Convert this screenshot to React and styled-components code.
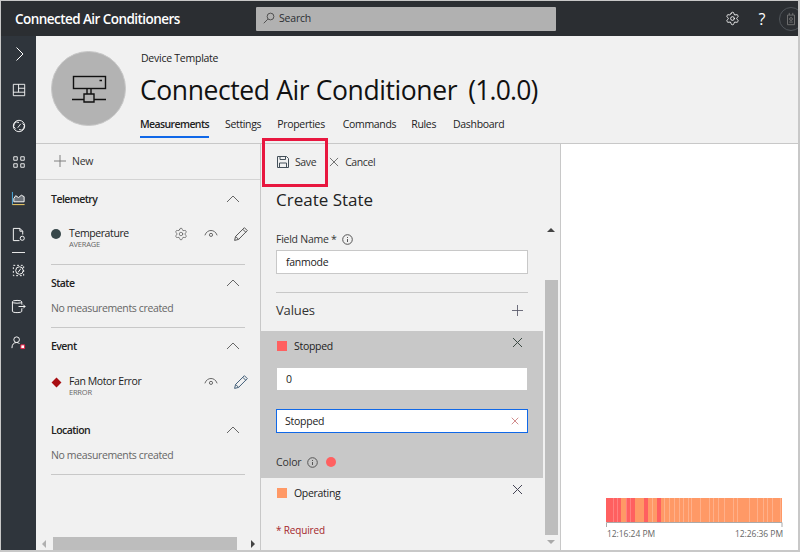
import React from 'react';
import styled, { createGlobalStyle } from 'styled-components';
import { Settings } from 'lucide-react';

const GlobalStyle = createGlobalStyle`
    html, body {
        margin: 0;
        padding: 0;
        background: #fff;
        font-family: 'Open Sans', 'Noto Sans', sans-serif;
    }
    * {
        box-sizing: border-box;
    }
`;

const Page = styled.div`
    width: 800px;
    height: 552px;
    position: relative;
    display: flex;
    flex-direction: column;
    overflow: hidden;
    background: #fff;
    border-top: 1px solid #c8c8c8;
    border-right: 2px solid #c8c8c8;
    border-bottom: 2px solid #c8c8c8;
    border-left: 1px solid #c8c8c8;
`;

const TopBar = styled.div`
    height: 35px;
    flex: none;
    background: #2b2e32;
    display: flex;
    align-items: center;
    color: #fff;
`;

const AppName = styled.div`
    width: 255px;
    padding-left: 14px;
    font-size: 13.5px;
    font-weight: 600;
    letter-spacing: -0.55px;
`;

const SearchBox = styled.div`
    width: 300px;
    height: 24px;
    background: #b1b1b1;
    border-radius: 1px;
    display: flex;
    align-items: center;
    gap: 4px;
    padding: 0 0 2px 7px;
    color: #2b2e32;
    font-size: 10.5px;
    letter-spacing: -0.2px;
`;

const TopActions = styled.div`
    margin-left: auto;
    margin-right: -5px;
    display: flex;
    align-items: center;
    color: #fff;
`;

const HelpMark = styled.div`
    width: 20px;
    margin: 0 7px 0 12px;
    text-align: center;
    font-size: 16px;
`;

const AvatarRing = styled.div`
    width: 24px;
    height: 24px;
    border-radius: 50%;
    border: 1px solid #50555a;
    display: flex;
    align-items: center;
    justify-content: center;
`;

const Body = styled.div`
    flex: 1;
    min-height: 0;
    display: flex;
`;

const Sidebar = styled.div`
    width: 35px;
    flex: none;
    background: #2f353c;
    display: flex;
    flex-direction: column;
`;

const NavItem = styled.div`
    height: 36px;
    flex: none;
    display: flex;
    align-items: center;
    justify-content: center;
`;

const NavRule = styled.div`
    width: 13px;
    height: 1px;
    flex: none;
    margin: 0 0 -1px 11px;
    background: #e6e6e6;
`;

const Main = styled.div`
    flex: 1;
    min-width: 0;
    display: flex;
    flex-direction: column;
`;

const Header = styled.div`
    height: 108px;
    flex: none;
    background: #f1f1f1;
    border-bottom: 1px solid #c8c8c8;
    display: flex;
    padding: 15px 0 0 15px;
`;

const DeviceCircle = styled.div`
    width: 75px;
    height: 75px;
    flex: none;
    border-radius: 50%;
    background: #b3b3b3;
    border: 1px solid #c8c8c8;
    display: flex;
    align-items: center;
    justify-content: center;
`;

const HeaderText = styled.div`
    margin-left: 14px;
    display: flex;
    flex-direction: column;
`;

const Eyebrow = styled.div`
    font-size: 10.5px;
    line-height: 14px;
    color: #222;
    padding-left: 1px;
    letter-spacing: -0.25px;
`;

const PageTitle = styled.h1`
    margin: 7px 0 0;
    font-size: 26.5px;
    line-height: 36px;
    font-weight: 400;
    color: #111;
    letter-spacing: -0.4px;
    display: flex;
    gap: 11px;
    white-space: nowrap;
`;

const TitleVersion = styled.span`
    letter-spacing: -0.8px;
`;

const Tabs = styled.div`
    display: flex;
    margin-top: 7px;
`;

const Tab = styled.div`
    height: 23px;
    margin-right: ${(props) => props.$gap}px;
    font-size: 10.5px;
    line-height: 19px;
    color: #222;
    letter-spacing: ${(props) => (props.$active ? -0.6 : -0.33)}px;
    font-weight: ${(props) => (props.$active ? 600 : 500)};
    border-bottom: 2px solid ${(props) => (props.$active ? '#1068e8' : 'transparent')};
    white-space: nowrap;
`;

const Panels = styled.div`
    flex: 1;
    min-height: 0;
    display: flex;
`;

const LeftPanel = styled.div`
    width: 225px;
    flex: none;
    background: #f1f1f1;
    border-right: 1px solid #c8c8c8;
    display: flex;
    flex-direction: column;
`;

const NewBar = styled.div`
    height: 36px;
    flex: none;
    border-bottom: 1px solid #d4d4d4;
    display: flex;
    align-items: center;
    gap: 6px;
    padding: 0 0 1px 18px;
    font-size: 10.5px;
    letter-spacing: -0.25px;
    color: #333;
`;

const MeasureList = styled.div`
    flex: 1;
    min-height: 0;
    padding: 0 15px;
`;

const Section = styled.div`
    border-bottom: ${(props) => (props.$plain ? 'none' : '1px solid #c8c8c8')};
    height: ${(props) => props.$height}px;
`;

const SectionHead = styled.div`
    height: ${(props) => props.$height}px;
    display: flex;
    align-items: center;
    justify-content: space-between;
    padding-right: 5px;
    font-size: 10.5px;
    font-weight: 600;
    color: #222;
    letter-spacing: -0.55px;
`;

const EmptyNote = styled.div`
    margin-top: 1px;
    font-size: 10.5px;
    line-height: 12px;
    color: #666;
    letter-spacing: -0.36px;
`;

const MeasureRow = styled.div`
    display: flex;
    align-items: flex-start;
    margin-top: ${(props) => props.$top}px;
    height: 26px;
`;

const StatusMark = styled.div`
    width: 18px;
    flex: none;
    padding-top: 2px;
`;

const Dot = styled.div`
    width: 10px;
    height: 10px;
    border-radius: 50%;
    background: #37474a;
`;

const Diamond = styled.div`
    width: 7px;
    height: 7px;
    margin: 2px 0 0 2px;
    background: #a80e12;
    transform: rotate(45deg);
`;

const MeasureText = styled.div`
    flex: 1;
`;

const MeasureName = styled.div`
    font-size: 10.5px;
    line-height: 13px;
    color: #222;
    letter-spacing: -0.4px;
`;

const MeasureKind = styled.div`
    font-size: 7.5px;
    line-height: 8px;
    color: #666;
    letter-spacing: -0.22px;
`;

const RowActions = styled.div`
    display: flex;
    align-items: center;
    gap: 16px;
    margin-right: -3px;
`;

const HScroll = styled.div`
    height: 13px;
    flex: none;
    display: flex;
    align-items: center;
`;

const ScrollArrow = styled.div`
    width: 0;
    height: 0;
    flex: none;
    border-top: 4px solid transparent;
    border-bottom: 4px solid transparent;
    border-right: ${(props) => (props.$side === 'left' ? '4px solid #b0b0b0' : 'none')};
    border-left: ${(props) => (props.$side === 'right' ? '4px solid #444' : 'none')};
    margin: ${(props) => (props.$side === 'left' ? '0 7px 0 6px' : '0 0 0 14px')};
`;

const HThumb = styled.div`
    width: 184px;
    height: 13px;
    flex: none;
    background: #bdbdbd;
`;

const CenterPanel = styled.div`
    width: 300px;
    flex: none;
    background: #f1f1f1;
    border-right: 1px solid #c8c8c8;
    display: flex;
    flex-direction: column;
`;

const Toolbar = styled.div`
    height: 36px;
    flex: none;
    display: flex;
    align-items: center;
    padding-left: 16px;
    font-size: 10.5px;
    color: #333;
    letter-spacing: -0.4px;
`;

const ToolButton = styled.div`
    display: flex;
    align-items: center;
    gap: 6px;
    margin-right: ${(props) => props.$gap}px;
`;

const FormTitle = styled.h2`
    margin: 0;
    height: 42px;
    padding: 7px 0 0 15px;
    font-size: 17px;
    line-height: 26px;
    font-weight: 400;
    color: #222;
`;

const FormBody = styled.div`
    flex: 1;
    min-height: 0;
    display: flex;
`;

const Form = styled.div`
    width: 282px;
    flex: none;
`;

const FieldBlock = styled.div`
    padding: 10px 15px 0;
`;

const FieldLabel = styled.div`
    display: flex;
    align-items: center;
    gap: 5px;
    height: 14px;
    font-size: 10.5px;
    color: #333;
    letter-spacing: -0.25px;
`;

const TextInput = styled.div`
    height: ${(props) => (props.$borderless ? 22 : 24)}px;
    margin: ${(props) => props.$margin};
    background: #fff;
    border: ${(props) => (props.$focus ? '1px solid #1068e8' : props.$borderless ? 'none' : '1px solid #c8c8c8')};
    display: flex;
    align-items: center;
    justify-content: space-between;
    padding: 0 ${(props) => (props.$focus ? 8 : 9)}px;
    font-size: 10.5px;
    color: #222;
    letter-spacing: -0.25px;
`;

const Rule = styled.div`
    height: 1px;
    margin-top: 18px;
    background: #c8c8c8;
`;

const ValuesHead = styled.div`
    height: 38px;
    display: flex;
    align-items: center;
    justify-content: space-between;
    padding: 0 20px 4px 15px;
    font-size: 13px;
    color: #333;
    letter-spacing: -0.15px;
`;

const ValueCard = styled.div`
    background: ${(props) => (props.$selected ? '#c8c8c8' : 'transparent')};
    padding: 0 15px;
    height: ${(props) => (props.$selected ? 147 : 37)}px;
`;

const ValueHead = styled.div`
    height: 30px;
    display: flex;
    align-items: center;
    gap: 7px;
    font-size: 10.5px;
    color: #222;
    letter-spacing: -0.3px;
`;

const Swatch = styled.div`
    width: 10px;
    height: 10px;
    margin-left: 1px;
    background: ${(props) => props.$color};
`;

const CloseSlot = styled.div`
    margin: -8px 5px 0 auto;
    display: flex;
`;

const ColorRow = styled.div`
    display: flex;
    align-items: center;
    gap: 6px;
    margin-top: 22px;
    font-size: 10.5px;
    color: #333;
    letter-spacing: -0.15px;
`;

const ColorDot = styled.div`
    width: 10px;
    height: 10px;
    margin-left: 2px;
    border-radius: 50%;
    background: #ff6060;
`;

const RequiredNote = styled.div`
    padding: 8px 0 0 15px;
    font-size: 10px;
    color: #a4262c;
    letter-spacing: -0.15px;
`;

const VScroll = styled.div`
    width: 15px;
    flex: none;
    display: flex;
    flex-direction: column;
    align-items: flex-end;
`;

const ArrowUp = styled.div`
    width: 0;
    height: 0;
    flex: none;
    margin: 6px 3px 0 0;
    border-left: 4px solid transparent;
    border-right: 4px solid transparent;
    border-bottom: 4px solid #444;
`;

const ArrowDown = styled.div`
    width: 0;
    height: 0;
    flex: none;
    margin: 5px 3px 0 0;
    border-left: 4px solid transparent;
    border-right: 4px solid transparent;
    border-top: 4px solid #aaa;
`;

const VThumb = styled.div`
    width: 13px;
    height: 255px;
    flex: none;
    margin-top: 48px;
    background: #bdbdbd;
`;

const RightPanel = styled.div`
    flex: 1;
    min-width: 0;
    background: #fff;
    display: flex;
    flex-direction: column;
    justify-content: flex-end;
    align-items: flex-end;
    padding: 0 15px 11px 0;
`;

const Timeline = styled.div`
    width: 177px;
    display: flex;
    flex-direction: column;
`;

const TimeLabels = styled.div`
    display: flex;
    justify-content: space-between;
    font-size: 8.5px;
    line-height: 11px;
    color: #666;
    padding-left: 1px;
    letter-spacing: -0.05px;
`;

const SaveHighlight = styled.div`
    position: absolute;
    left: 261px;
    top: 137px;
    width: 66px;
    height: 49px;
    border: 3px solid #e8173f;
    pointer-events: none;
`;

const Outline = ({ size = 16, color = '#fff', width = 1, children }) => (
    <svg width={size} height={size} viewBox="0 0 16 16" fill="none" stroke={color} strokeWidth={width}>
        {children}
    </svg>
);

const EyeIcon = () => (
    <Outline size={14} color="#555">
        <path d="M1 9.5C2.5 5.5 5.2 4 8 4s5.5 1.5 7 5.5" />
        <circle cx="8" cy="9" r="1.8" />
    </Outline>
);

const PencilIcon = ({ color = '#555' }) => (
    <svg width="14" height="14" viewBox="0 0 14 14" fill="none" stroke={color} strokeWidth="1">
        <path d="M.6 13.4l1-4L10.4.7l2.9 2.9-8.7 8.8z" />
        <path d="M8.8 2.3l2.9 2.9M1.6 9.4l3 3" />
    </svg>
);

const ChevronUp = () => (
    <svg width="14" height="8" viewBox="0 0 14 8" fill="none" stroke="#666" strokeWidth="1">
        <path d="M1 7l6-6 6 6" />
    </svg>
);

const CrossIcon = ({ size = 11, color = '#444' }) => (
    <svg width={size} height={size} viewBox="0 0 11 11" fill="none" stroke={color} strokeWidth="1">
        <path d="M1 1l9 9M10 1l-9 9" />
    </svg>
);

const PlusIcon = ({ size = 13, color = '#555' }) => (
    <svg width={size} height={size} viewBox="0 0 13 13" fill="none" stroke={color} strokeWidth="1">
        <path d="M6.5 0v13M0 6.5h13" />
    </svg>
);

const InfoIcon = () => (
    <svg width="11" height="11" viewBox="0 0 11 11" fill="none" stroke="#555" strokeWidth="1">
        <circle cx="5.5" cy="5.5" r="4.8" />
        <path d="M5.5 5v3M5.5 3v1" />
    </svg>
);

const SaveIcon = () => (
    <svg width="12" height="12" viewBox="0 0 12 12" fill="none" stroke="#44505a" strokeWidth="1">
        <path d="M.5.5h9l2 2v9H.5z" />
        <path d="M3 .5v3h5.5v-3M2.5 11.5V7h7v4.5" />
    </svg>
);

const DeviceIcon = () => (
    <svg width="36" height="36" viewBox="0 0 36 36" fill="none" stroke="#111" strokeWidth="1.4">
        <rect x="2.5" y="5.5" width="32" height="12" />
        <path d="M28.5 9.5h2.5" strokeWidth="1.5" />
        <path d="M16 18v5M20 18v5M13 23h10v8H13zM1 28.5h12M23 28.5h12" />
    </svg>
);

const navIcons = [
    <Outline key="chev" size={16}>
        <path d="M5.5 1.5L12 8l-6.5 6.5" />
    </Outline>,
    <Outline key="dash" size={14}>
        <path d="M1.5 1.5h13v13h-13zM1.5 10.5h13M7.5 1.5v9M7.5 6h7" />
    </Outline>,
    <Outline key="gauge" size={14}>
        <circle cx="8" cy="8" r="6.5" />
        <path d="M4 11a4 4 0 0 1 4-7M12 5a4 4 0 0 1-4 7M6.5 10L10 5.5" />
    </Outline>,
    <Outline key="apps" size={14}>
        <path d="M2 2h4v4H2zM10 2h4v4h-4zM2 10h4v4H2zM10 10h4v4h-4z" />
    </Outline>,
    <Outline key="chart" size={15}>
        <path d="M1.5 1v13.5" stroke="#4fb3ea" />
        <path d="M3 11.5h11V6l-3-1.5L8 7 5 5 3 8z" fill="#dfe6ea" fillOpacity="0.35" />
        <path d="M1.5 14.5h13" stroke="#ffd76a" />
    </Outline>,
    <Outline key="doc" size={15}>
        <path d="M9 14.5H2.5v-13h7l3 3V8" />
        <path d="M9.5 1.5v3h3" />
        <circle cx="12" cy="12" r="2.2" />
    </Outline>,
];

const navIconsBelow = [
    <Outline key="dashed" size={15}>
        <path d="M2.5 2.5h11v11h-11z" strokeDasharray="2 2" />
        <circle cx="9" cy="8" r="4" />
        <path d="M7.5 10L10.5 6" />
    </Outline>,
    <Outline key="export" size={15}>
        <ellipse cx="6.5" cy="3" rx="5" ry="1.5" />
        <path d="M1.5 3v10c0 1 2 1.5 5 1.5s5-.5 5-1.5v-3M11.5 3v3M8 8h7M13 6l2 2-2 2" />
    </Outline>,
    <Outline key="user" size={15}>
        <circle cx="6" cy="5" r="3" />
        <path d="M1 14c0-4 2-6 5-6 1.5 0 2.5.5 3 1.5" />
        <path d="M10.5 10.5h4v4h-4z" fill="#fff" stroke="#e8173f" />
    </Outline>,
];

const RED = '#ff6060';
const ORANGE = '#ff9966';
const PALE_RED = '#ff8080';
const PALE_ORANGE = '#ffb08a';

const leadSegments = [
    [7, RED], [1, PALE_RED], [3, RED], [1, PALE_RED], [3, RED], [5, ORANGE],
    [1, PALE_RED], [3, RED], [1, PALE_RED], [4, RED], [9, ORANGE], [4, RED],
    [4, ORANGE], [1, PALE_ORANGE], [4, ORANGE], [4, RED],
];

const stripes = [58, 63, 68, 73, 77, 82, 85, 94, 103, 107, 112, 118, 127, 131, 143, 151, 157, 161, 166, 174];

const TimelineChart = () => {
    let x = 0;
    const lead = leadSegments.map(([w, fill]) => {
        const rect = <rect key={x} x={x} y="0" width={w} height="24" fill={fill} />;
        x += w;
        return rect;
    });
    return (
        <svg width="177" height="30" viewBox="0 0 177 30">
            {lead}
            <rect x="55" y="0" width="121" height="24" fill={ORANGE} />
            {stripes.map((s) => (
                <rect key={s} x={s} y="0" width="1" height="24" fill={PALE_ORANGE} />
            ))}
            <path d="M.5 29v-4.5h175.5V29" fill="none" stroke="#aaa" strokeWidth="1" />
        </svg>
    );
};

const tabs = [
    { label: 'Measurements', gap: 16, active: true },
    { label: 'Settings', gap: 16 },
    { label: 'Properties', gap: 18 },
    { label: 'Commands', gap: 15 },
    { label: 'Rules', gap: 17 },
    { label: 'Dashboard', gap: 0 },
];

const App = () => {
    return (
        <Page>
            <GlobalStyle />
            <TopBar>
                <AppName>Connected Air Conditioners</AppName>
                <SearchBox>
                    <Outline size={12} color="#333">
                        <circle cx="10" cy="6" r="4.5" />
                        <path d="M6.5 9.5L1 15" />
                    </Outline>
                    Search
                </SearchBox>
                <TopActions>
                    <Settings size={15} color="#fff" strokeWidth={1.4} />
                    <HelpMark>?</HelpMark>
                    <AvatarRing>
                        <Outline size={14} color="#777">
                            <path d="M4 3.5h8v11H4zM6 1v2.5M10 1v2.5M6 11.5h4" />
                            <circle cx="8" cy="8" r="1.6" />
                        </Outline>
                    </AvatarRing>
                </TopActions>
            </TopBar>
            <Body>
                <Sidebar>
                    {navIcons.map((icon) => (
                        <NavItem key={icon.key}>{icon}</NavItem>
                    ))}
                    <NavRule />
                    {navIconsBelow.map((icon) => (
                        <NavItem key={icon.key}>{icon}</NavItem>
                    ))}
                </Sidebar>
                <Main>
                    <Header>
                        <DeviceCircle>
                            <DeviceIcon />
                        </DeviceCircle>
                        <HeaderText>
                            <Eyebrow>Device Template</Eyebrow>
                            <PageTitle>
                                <span>Connected Air Conditioner</span>
                                <TitleVersion>(1.0.0)</TitleVersion>
                            </PageTitle>
                            <Tabs>
                                {tabs.map((tab) => (
                                    <Tab key={tab.label} $gap={tab.gap} $active={tab.active}>
                                        {tab.label}
                                    </Tab>
                                ))}
                            </Tabs>
                        </HeaderText>
                    </Header>
                    <Panels>
                        <LeftPanel>
                            <NewBar>
                                <PlusIcon size={12} color="#777" />
                                New
                            </NewBar>
                            <MeasureList>
                                <Section $height={85}>
                                    <SectionHead $height={38}>
                                        Telemetry
                                        <ChevronUp />
                                    </SectionHead>
                                    <MeasureRow $top={9}>
                                        <StatusMark>
                                            <Dot />
                                        </StatusMark>
                                        <MeasureText>
                                            <MeasureName>Temperature</MeasureName>
                                            <MeasureKind>AVERAGE</MeasureKind>
                                        </MeasureText>
                                        <RowActions>
                                            <Settings size={14} color="#555" strokeWidth={1.2} />
                                            <EyeIcon />
                                            <PencilIcon />
                                        </RowActions>
                                    </MeasureRow>
                                </Section>
                                <Section $height={63}>
                                    <SectionHead $height={36}>
                                        State
                                        <ChevronUp />
                                    </SectionHead>
                                    <EmptyNote>No measurements created</EmptyNote>
                                </Section>
                                <Section $height={84} $plain>
                                    <SectionHead $height={36}>
                                        Event
                                        <ChevronUp />
                                    </SectionHead>
                                    <MeasureRow $top={11}>
                                        <StatusMark>
                                            <Diamond />
                                        </StatusMark>
                                        <MeasureText>
                                            <MeasureName>Fan Motor Error</MeasureName>
                                            <MeasureKind>ERROR</MeasureKind>
                                        </MeasureText>
                                        <RowActions>
                                            <EyeIcon />
                                            <PencilIcon color="#44607a" />
                                        </RowActions>
                                    </MeasureRow>
                                </Section>
                                <Section $height={63}>
                                    <SectionHead $height={36}>
                                        Location
                                        <ChevronUp />
                                    </SectionHead>
                                    <EmptyNote>No measurements created</EmptyNote>
                                </Section>
                            </MeasureList>
                            <HScroll>
                                <ScrollArrow $side="left" />
                                <HThumb />
                                <ScrollArrow $side="right" />
                            </HScroll>
                        </LeftPanel>
                        <CenterPanel>
                            <Toolbar>
                                <ToolButton $gap={13}>
                                    <SaveIcon />
                                    Save
                                </ToolButton>
                                <ToolButton $gap={0}>
                                    <CrossIcon size={10} color="#666" />
                                    Cancel
                                </ToolButton>
                            </Toolbar>
                            <FormTitle>Create State</FormTitle>
                            <FormBody>
                                <Form>
                                    <FieldBlock>
                                        <FieldLabel>
                                            Field Name *
                                            <InfoIcon />
                                        </FieldLabel>
                                        <TextInput $margin="4px 0 0">fanmode</TextInput>
                                        <Rule />
                                    </FieldBlock>
                                    <ValuesHead>
                                        Values
                                        <PlusIcon size={11} color="#556" />
                                    </ValuesHead>
                                    <ValueCard $selected>
                                        <ValueHead>
                                            <Swatch $color="#ff6060" />
                                            Stopped
                                            <CloseSlot>
                                                <CrossIcon color="#3c4a44" />
                                            </CloseSlot>
                                        </ValueHead>
                                        <TextInput $borderless $margin="7px 1px 0">0</TextInput>
                                        <TextInput $focus $margin="19px 0 0">
                                            Stopped
                                            <CrossIcon size={8} color="#c06060" />
                                        </TextInput>
                                        <ColorRow>
                                            Color
                                            <InfoIcon />
                                            <ColorDot />
                                        </ColorRow>
                                    </ValueCard>
                                    <ValueCard>
                                        <ValueHead>
                                            <Swatch $color="#ff9966" />
                                            Operating
                                            <CloseSlot>
                                                <CrossIcon color="#445" />
                                            </CloseSlot>
                                        </ValueHead>
                                    </ValueCard>
                                    <RequiredNote>* Required</RequiredNote>
                                </Form>
                                <VScroll>
                                    <ArrowUp />
                                    <VThumb />
                                    <ArrowDown />
                                </VScroll>
                            </FormBody>
                        </CenterPanel>
                        <RightPanel>
                            <Timeline>
                                <TimelineChart />
                                <TimeLabels>
                                    <span>12:16:24 PM</span>
                                    <span>12:26:36 PM</span>
                                </TimeLabels>
                            </Timeline>
                        </RightPanel>
                    </Panels>
                </Main>
            </Body>
            <SaveHighlight />
        </Page>
    );
};

export default App;
